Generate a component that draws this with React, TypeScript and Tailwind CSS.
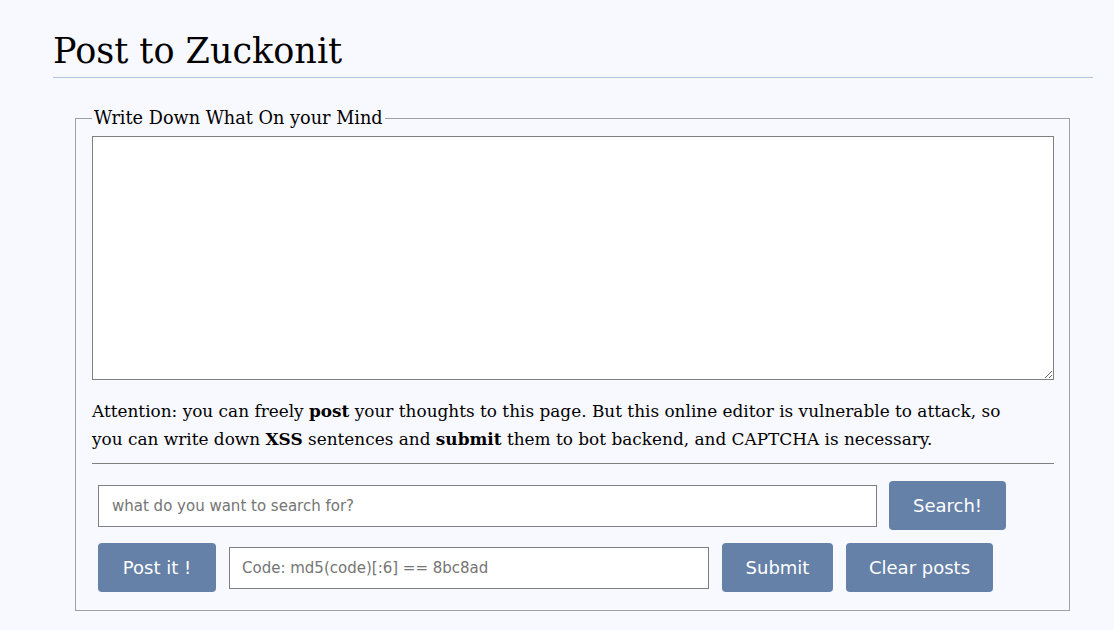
export default function App() {
  return (
    <div className="min-h-[630px] bg-[#f8f8ff] pl-[53px] pr-[21px] pt-[28px] font-['DejaVu_Serif',serif] text-black">
      <h1 className="border-b border-[#b0c4de] pb-[3px] text-[35px] leading-[46px] font-normal">Post to Zuckonit</h1>

      <fieldset className="ml-[22px] mr-[23px] mt-[29px] border border-[#a0a0a0] pl-[16px] pr-[15px] pb-[18px] pt-0">
        <legend className="px-[2px] text-[17.7px] leading-[22px]">Write Down What On your Mind</legend>

        <textarea className="mt-[7px] block h-[244px] w-full resize border border-[#808080] bg-white p-1 outline-none" />

        <p className="mt-[17px] text-[16.9px] leading-[28px]">
          Attention: you can freely <b>post</b> your thoughts to this page. But this online editor is vulnerable to attack, so
          <br />
          you can write down <b>XSS</b> sentences and <b>submit</b> them to bot backend, and CAPTCHA is necessary.
        </p>

        <hr className="mt-[10px] border-0 border-t border-[#808080]" />

        <div className="mt-[17px] flex flex-col gap-[13px] pl-[6px] font-['DejaVu_Sans',sans-serif]">
          <div className="flex items-center gap-[12px]">
            <input
              className="h-[42px] w-[779px] border border-[#808080] bg-white px-[13px] text-[15px] outline-none placeholder:text-[#757575]"
              placeholder="what do you want to search for?"
            />
            <button className="h-[49px] w-[117px] rounded-[4px] bg-[#6581a8] text-[18px] text-white">Search!</button>
          </div>
          <div className="flex items-center gap-[13px]">
            <button className="h-[49px] w-[118px] rounded-[4px] bg-[#6581a8] text-[18px] text-white">Post it !</button>
            <input
              className="h-[42px] w-[480px] border border-[#808080] bg-white px-[12px] text-[15px] outline-none placeholder:text-[#757575]"
              placeholder="Code: md5(code)[:6] == 8bc8ad"
            />
            <button className="h-[49px] w-[111px] rounded-[4px] bg-[#6581a8] text-[18px] text-white">Submit</button>
            <button className="h-[49px] w-[147px] rounded-[4px] bg-[#6581a8] text-[18px] text-white">Clear posts</button>
          </div>
        </div>
      </fieldset>
    </div>
  );
}
